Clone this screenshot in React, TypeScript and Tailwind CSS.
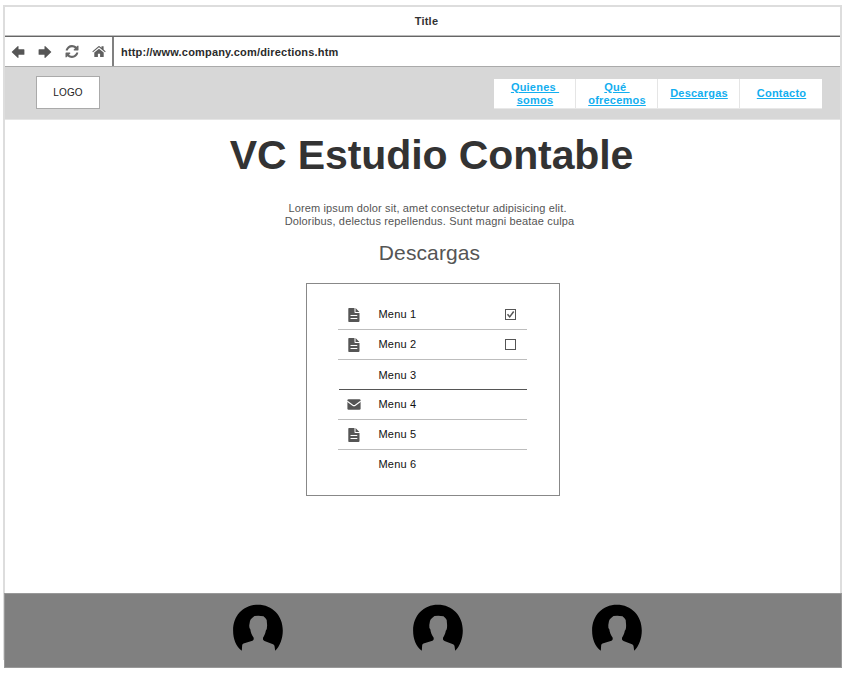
import React from "react";

const iconColor = "#555555";

function LeftArrow() {
  return (
    <svg width="14" height="14" viewBox="0 0 14 14" fill={iconColor}>
      <path d="M0.600 7 L6.600 1.300 Q7.500 .8 7.500 1.700 V4.200 H12.800 Q13.400 4.200 13.400 4.800 V9.200 Q13.400 9.800 12.800 9.800 H7.500 V12.300 Q7.500 13.200 6.600 12.700 Z" />
    </svg>
  );
}

function RightArrow() {
  return (
    <svg width="14" height="14" viewBox="0 0 14 14" fill={iconColor}>
      <path d="M13.400 7 L7.400 1.300 Q6.500 .8 6.500 1.700 V4.200 H1.200 Q.6 4.200 .6 4.800 V9.200 Q.6 9.800 1.200 9.800 H6.500 V12.300 Q6.500 13.200 7.400 12.700 Z" />
    </svg>
  );
}

function Refresh() {
  return (
    <svg width="14" height="13" viewBox="0 0 1536 1536" fill="#666666">
      <path d="M1511 928q0 5-1 7-64 268-268 434.500T764 1536q-146 0-282.500-55T238 1324l-129 129q-19 19-45 19t-45-19-19-45V960q0-26 19-45t45-19h448q26 0 45 19t19 45-19 45l-137 137q71 66 161 102t187 36q134 0 250-65t186-179q11-17 53-117 8-23 30-23h192q13 0 22.500 9.500t9.500 22.500zm25-800v448q0 26-19 45t-45 19h-448q-26 0-45-19t-19-45 19-45l138-138Q969 256 768 256q-134 0-250 65T332 500q-11 17-53 117-8 23-30 23H50q-13 0-22.500-9.500T18 608v-7q65-268 270-434.500T768 0q146 0 284 55.500T1297 212l130-129q19-19 45-19t45 19 19 45z" />
    </svg>
  );
}

function Home() {
  return (
    <svg width="14" height="13" viewBox="0 0 14 13" fill="#606060">
      <path d="M7 3.7 L2.3 7.6 V11.6 Q2.3 12.1 2.8 12.1 H5.9 V8.8 H8.1 V12.1 H11.2 Q11.7 12.1 11.7 11.6 V7.6 Z" />
      <path d="M0.3 6.5 L6.4 1.2 Q7 .8 7.6 1.2 L9.5 2.8 V1.2 H11.6 V4.5 L13.7 6.5 L13 7.2 L7 2.3 L1 7.2 Z" />
    </svg>
  );
}

function FileIcon() {
  return (
    <svg width="12" height="14" viewBox="0 0 12 14" fill={iconColor}>
      <path d="M1 0 H6.5 V4.2 Q6.5 5 7.3 5 H11.5 V13 Q11.500 14 10.500 14 H1 Q0.300 14 .3 13.300 V.8 Q.3 0 1 0 Z" />
      <path d="M7.500 .1 L11.400 4 H7.500 Z" />
      <path d="M2.500 7.500 H9.300 M2.500 10.500 H9.300" stroke="white" />
    </svg>
  );
}

function MailIcon() {
  return (
    <svg width="14" height="11" viewBox="0 0 14 11">
      <rect x="0.400" y="0.300" width="13.200" height="10.400" rx="1.200" fill={iconColor} />
      <path d="M.3 2.200 L5.700 6.200 Q7 7.100 8.300 6.200 L13.700 2.200" fill="none" stroke="white" strokeWidth="1.100" />
    </svg>
  );
}

function Checkbox({ checked }: { checked: boolean }) {
  return (
    <svg width="12" height="12" viewBox="0 0 12 12" fill="none" stroke="#555555">
      <rect x="0.500" y="0.500" width="10" height="10" />
      {checked && <path d="M2.500 5.300 L4.700 7.900 L8.700 2.500" strokeWidth="1.500" />}
    </svg>
  );
}

function Avatar() {
  return (
    <svg width="50" height="50" viewBox="0 0 50 50">
      <path d="M8.800 46.700 C3 42.500 .1 35 .1 26.500 C.1 11.500 10.500 .7 24.900 .7 C39.300 .7 49.800 11.500 49.800 26.500 C49.800 34.500 46.800 42.500 42.200 46.700 L41.500 42 Q41.300 40.700 40 40.200 L31.500 36.900 Q30.300 36.400 30 35.500 V33.700 C31.200 31.600 32.400 29.500 32.800 26.700 Q34.200 25.500 34.100 21 L33.700 16 Q33 14.200 30.500 12.300 Q26 11.300 21.500 12 L19.700 13.500 Q17.300 15 17 17 L16.300 21 Q16 24 17.300 25.300 C17.700 28.500 18.800 31 20.700 33.700 V35.300 Q20.600 36.200 19.500 36.700 L10.500 39.500 Q9.300 40 9.200 41 Z" />
    </svg>
  );
}

const navItems = [["Quienes\u00a0", "somos"], ["Qué\u00a0", "ofrecemos"], ["Descargas"], ["Contacto"]];

const menu = [
  { label: "Menu 1", icon: "file", check: true, row: "h-[30px] border-[#bdbdbd]" },
  { label: "Menu 2", icon: "file", check: false, row: "h-[30px] border-[#bdbdbd]" },
  { label: "Menu 3", row: "h-[30px] border-[#555555] ml-px pt-0.5" },
  { label: "Menu 4", icon: "mail", row: "h-[30px] border-[#bdbdbd]" },
  { label: "Menu 5", icon: "file", row: "h-[30px] border-[#bdbdbd]" },
  { label: "Menu 6", row: "h-[30px] border-transparent" },
];

export default function App() {
  return (
    <div className="h-[677px] w-[847px] overflow-hidden bg-white pl-[3px] pt-[5px] font-['Liberation_Sans',Arial,sans-serif]">
      <div className="w-[839px] border-t-2 border-[#dddddd]">
        <div className="flex h-[586px] flex-col border-x-2 border-[#dddddd]">
          <div className="flex h-[30px] shrink-0 items-center justify-center border-b border-[#666666] pl-2 text-[11px] font-bold leading-none tracking-[0.2px] text-[#333333] shadow-[inset_0_-1px_#bbbbbb]">
            Title
          </div>
          <div className="flex h-[30px] shrink-0 border-b border-[#aaaaaa]">
            <div className="flex w-[109px] items-center gap-[13px] border-r-2 border-[#808080] pl-1.5">
              <LeftArrow />
              <RightArrow />
              <Refresh />
              <Home />
            </div>
            <div className="flex items-center pl-[7px] pt-px text-[11px] font-bold leading-none tracking-[0.180px] text-[#2b2b2b]">
              http://www.company.com/directions.htm
            </div>
          </div>
          <header className="flex h-[53px] shrink-0 items-start justify-between border-b border-[#e5e5e5] bg-[#d7d7d7] pl-[31px] pr-[18px]">
            <div className="mt-[9px] flex h-[33px] w-16 items-center justify-center border border-[#aaaaaa] bg-white text-[10px] leading-none tracking-[0.2px] text-[#222222]">
              LOGO
            </div>
            <nav className="mt-3 flex h-[30px] divide-x divide-[#e5e5e5] border-b border-[#e8e8e8] bg-white">
              {navItems.map((lines) => (
                <a key={lines[0]} className="flex w-[82px] flex-col items-center justify-center pl-px text-[11px] font-bold leading-[13px] tracking-[0.220px] text-[#12aeef]">
                  {lines.map((line) => (
                    <span key={line} className="underline">{line}</span>
                  ))}
                </a>
              ))}
            </nav>
          </header>
          <main className="flex flex-col items-center">
            <h1 className="mt-3 pl-[18px] text-[41px] font-bold leading-[47px] tracking-[-0.100px] text-[#333333]">VC Estudio Contable</h1>
            <div className="mt-[23px] whitespace-nowrap pl-3.5 text-center text-[11px] leading-[13px] text-[#555555]">
              <p className="pr-1 tracking-[0.140px]">Lorem ipsum dolor sit, amet consectetur adipisicing elit.</p>
              <p className="tracking-[0.150px]">Doloribus, delectus repellendus. Sunt magni beatae culpa</p>
            </div>
            <h2 className="mt-[13px] pl-3.5 text-[21px] leading-6 tracking-[0.100px] text-[#555555]">Descargas</h2>
            <section className="ml-5 mt-[18px] h-[213px] w-[254px] border border-[#888888] pl-[31px] pt-4">
              {menu.map((item) => (
                <div key={item.label} className="w-[189px]">
                  <div className={`flex items-center border-b ${item.row}`}>
                    <div className={item.row.includes("ml-px") ? "w-10 shrink-0" : "flex w-[41px] shrink-0 items-center pl-[9px]"}>
                      {item.icon === "file" && <span className="pl-px"><FileIcon /></span>}
                      {item.icon === "mail" && <MailIcon />}
                    </div>
                    <span className="text-[11px] leading-none tracking-[0.200px] text-[#111111]">{item.label}</span>
                    {item.check !== undefined && (
                      <span className="ml-auto mr-2.5"><Checkbox checked={item.check} /></span>
                    )}
                  </div>
                </div>
              ))}
            </section>
          </main>
        </div>
        <div className="flex">
          <div className="h-[67px] w-px bg-[#dddddd]" />
          <footer className="flex h-[75px] flex-1 gap-[129.5px] border border-[#999999] bg-[#808080] pl-[228px] pt-[10px]">
            <Avatar />
            <Avatar />
            <Avatar />
          </footer>
        </div>
      </div>
    </div>
  );
}
